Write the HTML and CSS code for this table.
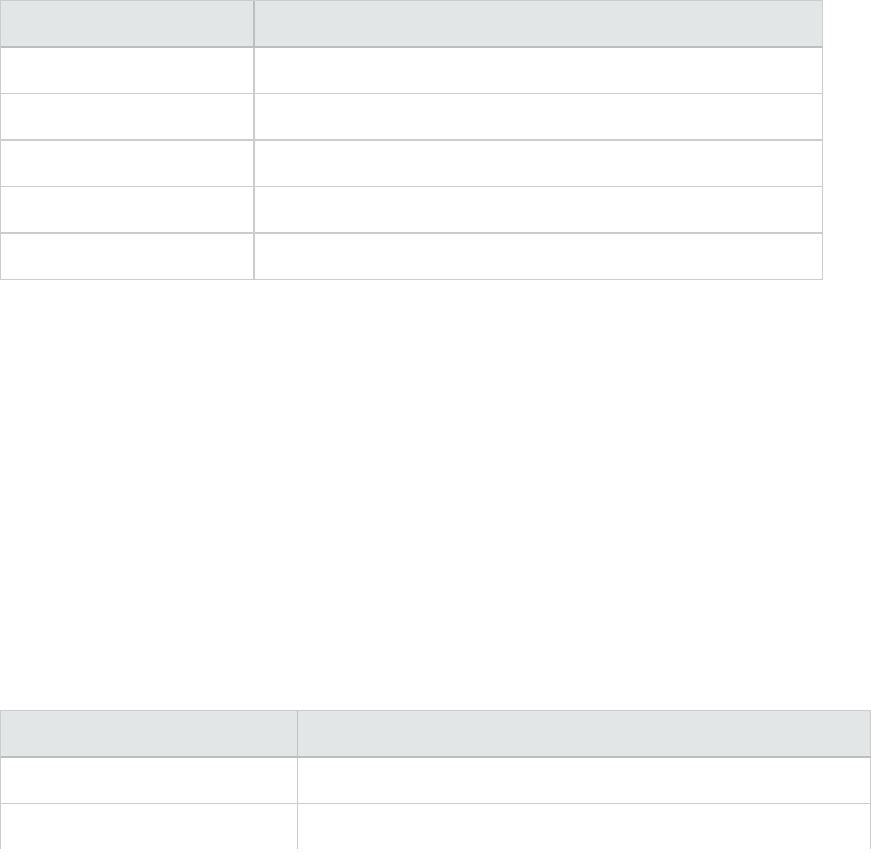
FILE: index.html
```html
<!DOCTYPE html>
<html>
<head>
<meta charset="utf-8">
<link rel="stylesheet" href="styles.css">
</head>
<body>
<table class="grid grid-a">
  <thead>
    <tr><th class="c1"></th><th class="c2"></th></tr>
  </thead>
  <tbody>
    <tr class="r46"><td class="c1"></td><td class="c2"></td></tr>
    <tr class="r47"><td class="c1"></td><td class="c2"></td></tr>
    <tr class="r46"><td class="c1"></td><td class="c2"></td></tr>
    <tr class="r47"><td class="c1"></td><td class="c2"></td></tr>
    <tr class="r46"><td class="c1"></td><td class="c2"></td></tr>
  </tbody>
</table>

<table class="grid grid-b">
  <thead>
    <tr><th class="c1"></th><th class="c2"></th></tr>
  </thead>
  <tbody>
    <tr class="r46"><td class="c1"></td><td class="c2"></td></tr>
    <tr class="r46 last"><td class="c1"></td><td class="c2"></td></tr>
  </tbody>
</table>
</body>
</html>
```

FILE: styles.css
```css
html, body {
  margin: 0;
  padding: 0;
  background: #ffffff;
  font-family: "Liberation Sans", Arial, sans-serif;
  font-size: 14px;
}

.grid {
  border-collapse: separate;
  border-spacing: 0;
  table-layout: fixed;
  border-top: 1px solid #cccccc;
  border-left: 1px solid #cccccc;
}

.grid th,
.grid td {
  padding: 0;
  box-sizing: content-box;
}

.grid th {
  background: #e3e6e7;
  height: 45px;
  border-bottom: 2px solid #bdbebf;
}

.grid td {
  background: #ffffff;
  height: 45px;
  border-bottom: 1px solid #cccccc;
}

.grid .c2 {
  border-right: 1px solid #cccccc;
}

.grid tr.r47 td { border-bottom-width: 2px; }
.grid tr.last td { border-bottom: none; }

/* first table */
.grid-a {
  width: 823px;
}
.grid-a .c1 {
  width: 252px;
  border-right: 2px solid #cccccc;
}
.grid-a th.c1 {
  border-right-color: #bdbebf;
}
.grid-a .c2 {
  width: 567px;
}

/* second table */
.grid-b {
  width: 871px;
  margin-top: 430px;
}
.grid-b .c1 {
  width: 296px;
  border-right: 1px solid #cccccc;
}
.grid-b th.c1 {
  border-right-color: #bdbebf;
}
.grid-b .c2 {
  width: 572px;
}
```
